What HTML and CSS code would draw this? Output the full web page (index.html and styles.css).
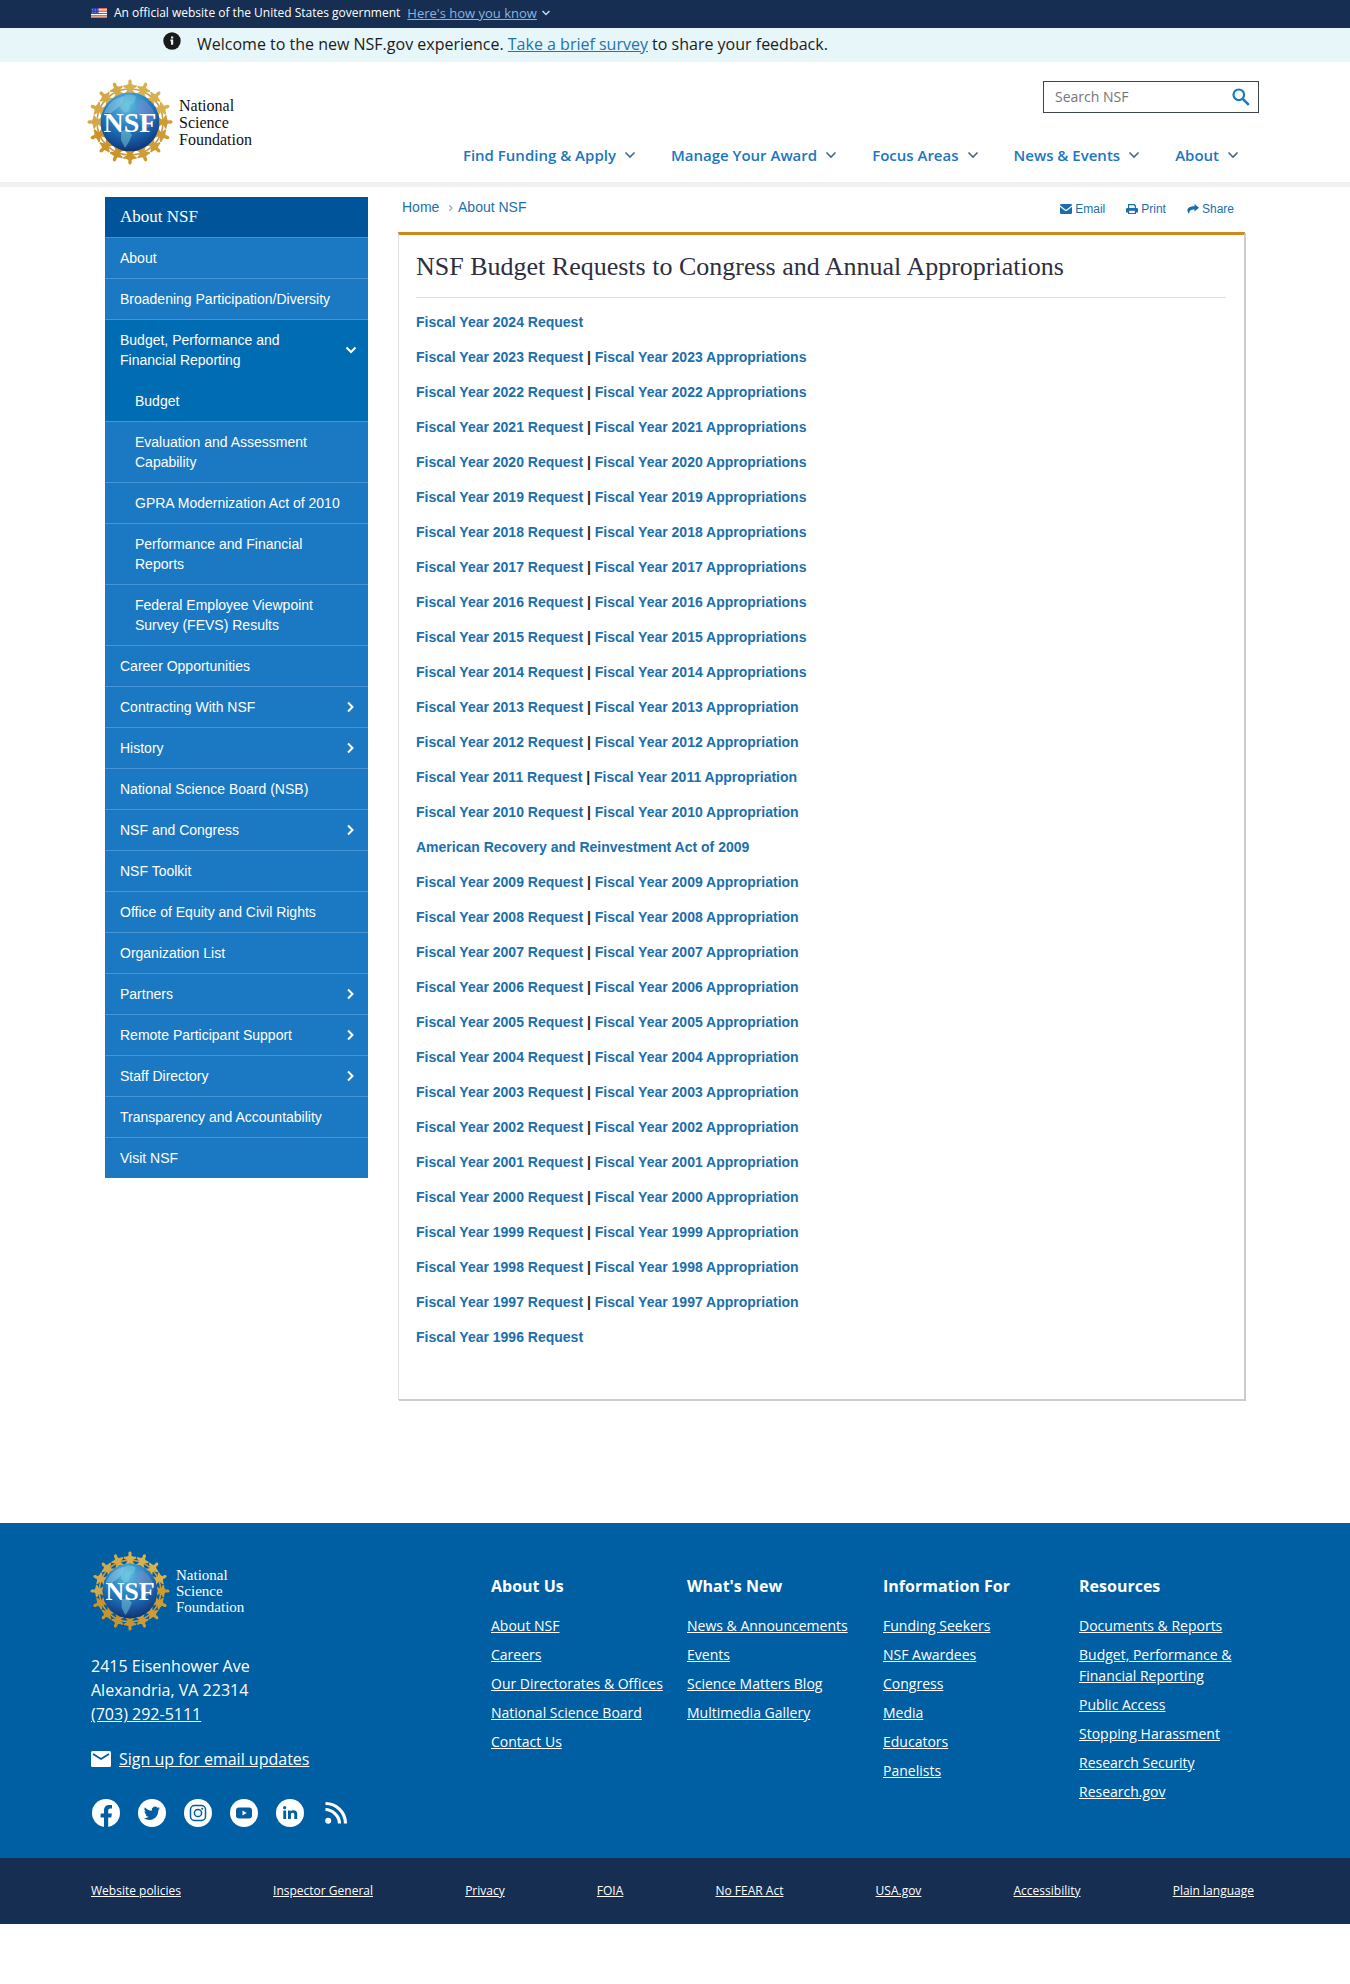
FILE: index.html
```html
<!DOCTYPE html>
<html lang="en">
<head>
<meta charset="utf-8">
<meta name="viewport" content="width=device-width, initial-scale=1">
<title>NSF Budget Requests to Congress and Annual Appropriations</title>
<link rel="stylesheet" href="styles.css">
</head>
<body>
<div class="gov-banner">
  <div class="container gov-banner-inner">
    <svg class="flag" viewBox="0 0 16 10" aria-hidden="true"><rect width="16" height="10" fill="#fff"/><path d="M0 .7h16M0 3.1h16M0 5.5h16M0 7.9h16M0 9.7h16" stroke="#db3e1f" stroke-width="1.1"/><rect width="7.5" height="5.5" fill="#1e33b1"/><path d="M1 1.2h6M1 2.8h6M1 4.4h6" stroke="#b9c0ee" stroke-width=".7" stroke-dasharray=".8 .8"/></svg>
    <span>An official website of the United States government</span>
    <button type="button" class="gov-button"><span>Here's how you know</span><svg class="chevron-xs" viewBox="0 0 10 6" aria-hidden="true"><path d="M1.5 1 5 4.5 8.500 1"/></svg></button>
  </div>
</div>
<div class="alert">
  <div class="container alert-inner">
    <svg class="info" viewBox="0 0 18 18" aria-hidden="true"><circle cx="9" cy="9" r="8.700" fill="#1b1b1b"/><path d="M8 4.500h2.200v2H8zM7.300 7.600h2.900v5.200H8V9.200h-.7z" fill="#e7f6f8"/></svg>
    <p>Welcome to the new NSF.gov experience. <a href="#">Take a brief survey</a> to share your feedback.</p>
  </div>
</div>
<header class="site-header">
  <div class="container header-inner">
    <a class="logo" href="#" aria-label="National Science Foundation home">
      <svg class="seal" viewBox="0 0 86 86" aria-hidden="true">
        <defs>
          <radialGradient id="globe" cx=".45" cy=".22" r=".82"><stop offset="0" stop-color="#63bfe2"/><stop offset=".4" stop-color="#2b85c4"/><stop offset=".75" stop-color="#16539c"/><stop offset="1" stop-color="#0b2e6b"/></radialGradient>
          <g id="person"><path d="M43 .5c1.300 0 1.900 1.400 1.700 3l-.1 1.600c1.400.9 3.400 1.300 5 1.200l.2 1.400c-1.500 1-3.300 1.600-4.200 2.600.2 1.600 1.600 3 3 4.100l-1 1.100c-1.700-.8-3.100-2.100-4.600-2.100s-2.900 1.300-4.600 2.100l-1-1.100c1.400-1.100 2.800-2.500 3-4.100-.9-1-2.700-1.600-4.200-2.600l.2-1.400c1.600.1 3.600-.3 5-1.200l-.1-1.600c-.2-1.600.4-3 1.700-3z"/></g>
          <g id="people"><use href="#person"/><use href="#person" transform="rotate(22.500 43 43)"/><use href="#person" transform="rotate(45 43 43)"/><use href="#person" transform="rotate(67.500 43 43)"/></g>
          <symbol id="nsf-seal" viewBox="0 0 86 86">
            <circle cx="43" cy="43" r="33" fill="none" stroke="#c99d48" stroke-width="1.600"/>
            <use href="#people" fill="#d9b04e"/>
            <use href="#people" fill="#cf9c33" transform="rotate(90 43 43)"/>
            <use href="#people" fill="#cb9328" transform="rotate(180 43 43)"/>
            <use href="#people" fill="#d5a847" transform="rotate(270 43 43)"/>
            <circle cx="43" cy="43" r="29.500" fill="url(#globe)"/>
            <path d="M37 17c3-2 9-2 12 1l-2 6-4 2-1 6-4 2-5-5 1-8zM34 52c5-2 9 0 11 4l-3 7-4 6-4-8z" fill="#7bd0dc" opacity=".5"/>
            <path d="M54 20c7 3 13 10 15 19l-8 10-7-8-4-9z" fill="#8a8fd0" opacity=".45"/>
            <path d="M17 34c4-10 11-15 20-17l-4 10-9 7z" fill="#bfe3f2" opacity=".35"/>
            <text x="43" y="53" text-anchor="middle" class="seal-text">NSF</text>
          </symbol>
        </defs>
        <use href="#nsf-seal" width="86" height="86"/>
      </svg>
      <span class="logo-text">National<br>Science<br>Foundation</span>
    </a>
    <div class="header-tools">
      <form class="search" role="search">
        <input type="search" placeholder="Search NSF" aria-label="Search NSF">
        <button type="button" aria-label="Search"><svg viewBox="0 0 18 18" aria-hidden="true"><circle cx="6.800" cy="6.800" r="5.300" fill="none" stroke="#1b76c0" stroke-width="2.200"/><path d="m10.800 10.800 6 6" stroke="#1b76c0" stroke-width="2.600"/></svg></button>
      </form>
      <nav class="main-nav" aria-label="Main">
        <button type="button">Find Funding &amp; Apply<svg viewBox="0 0 12 8" aria-hidden="true"><path d="m1.500 1.500 4.500 4.500 4.500-4.500"/></svg></button>
        <button type="button">Manage Your Award<svg viewBox="0 0 12 8" aria-hidden="true"><path d="m1.500 1.500 4.500 4.500 4.500-4.500"/></svg></button>
        <button type="button">Focus Areas<svg viewBox="0 0 12 8" aria-hidden="true"><path d="m1.500 1.500 4.500 4.500 4.500-4.500"/></svg></button>
        <button type="button">News &amp; Events<svg viewBox="0 0 12 8" aria-hidden="true"><path d="m1.500 1.500 4.500 4.500 4.500-4.500"/></svg></button>
        <button type="button">About<svg viewBox="0 0 12 8" aria-hidden="true"><path d="m1.500 1.500 4.500 4.500 4.500-4.500"/></svg></button>
      </nav>
    </div>
  </div>
</header>
<div class="page">
  <nav class="sidebar" aria-label="About NSF">
    <h2>About NSF</h2>
    <ul>
      <li><a href="#">About</a></li>
      <li><a href="#">Broadening Participation/Diversity</a></li>
      <li class="open"><a href="#">Budget, Performance and Financial Reporting<svg viewBox="0 0 12 12" aria-hidden="true"><path d="m1.500 3.500 4.500 4.500 4.500-4.500"/></svg></a>
        <ul>
          <li class="current"><a href="#">Budget</a></li>
          <li><a href="#">Evaluation and Assessment Capability</a></li>
          <li><a href="#">GPRA Modernization Act of 2010</a></li>
          <li><a href="#">Performance and Financial Reports</a></li>
          <li><a href="#">Federal Employee Viewpoint Survey (FEVS) Results</a></li>
        </ul>
      </li>
      <li><a href="#">Career Opportunities</a></li>
      <li><a href="#">Contracting With NSF<svg viewBox="0 0 12 12" aria-hidden="true"><path d="m3 1.500 4.500 4.500-4.500 4.500"/></svg></a></li>
      <li><a href="#">History<svg viewBox="0 0 12 12" aria-hidden="true"><path d="m3 1.500 4.500 4.500-4.500 4.500"/></svg></a></li>
      <li><a href="#">National Science Board (NSB)</a></li>
      <li><a href="#">NSF and Congress<svg viewBox="0 0 12 12" aria-hidden="true"><path d="m3 1.500 4.500 4.500-4.500 4.500"/></svg></a></li>
      <li><a href="#">NSF Toolkit</a></li>
      <li><a href="#">Office of Equity and Civil Rights</a></li>
      <li><a href="#">Organization List</a></li>
      <li><a href="#">Partners<svg viewBox="0 0 12 12" aria-hidden="true"><path d="m3 1.500 4.500 4.500-4.500 4.500"/></svg></a></li>
      <li><a href="#">Remote Participant Support<svg viewBox="0 0 12 12" aria-hidden="true"><path d="m3 1.500 4.500 4.500-4.500 4.500"/></svg></a></li>
      <li><a href="#">Staff Directory<svg viewBox="0 0 12 12" aria-hidden="true"><path d="m3 1.500 4.500 4.500-4.500 4.500"/></svg></a></li>
      <li><a href="#">Transparency and Accountability</a></li>
      <li><a href="#">Visit NSF</a></li>
    </ul>
  </nav>
  <main class="main">
    <div class="toolbar">
      <nav class="breadcrumb" aria-label="Breadcrumb"><a href="#">Home</a><span>›</span><a href="#">About NSF</a></nav>
      <div class="actions">
        <a href="#"><svg viewBox="0 0 12 12" aria-hidden="true"><path d="M0 2.200Q0 1 1.200 1h9.600Q12 1 12 2.200L7 6.300q-1 .8-2 0zM0 3.800l4.300 3.500q1.700 1.200 3.400 0L12 3.800v6.100q0 1.100-1.200 1.100H1.200Q0 11 0 9.900z"/></svg>Email</a>
        <a href="#"><svg viewBox="0 0 12 12" aria-hidden="true"><path fill-rule="evenodd" d="M2 5V1h6.500L10 2.500V5h.8Q12 5 12 6.200v3.300h-2V11H2V9.500H0V6.200Q0 5 1.200 5zm1.200 0h5.600V3H8V2.200H3.200zm0 2.700v2.200h5.600V7.700z"/></svg>Print</a>
        <a href="#"><svg viewBox="0 0 12 12" aria-hidden="true"><path d="M7.500 1 12 4.800 7.500 8.600V6.400C4.500 6.300 2.500 7 2 10.800-1.500 6.500 1 3.200 7.500 3.200z"/></svg>Share</a>
      </div>
    </div>
    <article class="panel">
      <h1>NSF Budget Requests to Congress and Annual Appropriations</h1>
      <div class="years">
        <p><a href="#">Fiscal Year 2024 Request</a></p>
        <p><a href="#">Fiscal Year 2023 Request</a> | <a href="#">Fiscal Year 2023 Appropriations</a></p>
        <p><a href="#">Fiscal Year 2022 Request</a> | <a href="#">Fiscal Year 2022 Appropriations</a></p>
        <p><a href="#">Fiscal Year 2021 Request</a> | <a href="#">Fiscal Year 2021 Appropriations</a></p>
        <p><a href="#">Fiscal Year 2020 Request</a> | <a href="#">Fiscal Year 2020 Appropriations</a></p>
        <p><a href="#">Fiscal Year 2019 Request</a> | <a href="#">Fiscal Year 2019 Appropriations</a></p>
        <p><a href="#">Fiscal Year 2018 Request</a> | <a href="#">Fiscal Year 2018 Appropriations</a></p>
        <p><a href="#">Fiscal Year 2017 Request</a> | <a href="#">Fiscal Year 2017 Appropriations</a></p>
        <p><a href="#">Fiscal Year 2016 Request</a> | <a href="#">Fiscal Year 2016 Appropriations</a></p>
        <p><a href="#">Fiscal Year 2015 Request</a> | <a href="#">Fiscal Year 2015 Appropriations</a></p>
        <p><a href="#">Fiscal Year 2014 Request</a> | <a href="#">Fiscal Year 2014 Appropriations</a></p>
        <p><a href="#">Fiscal Year 2013 Request</a> | <a href="#">Fiscal Year 2013 Appropriation</a></p>
        <p><a href="#">Fiscal Year 2012 Request</a> | <a href="#">Fiscal Year 2012 Appropriation</a></p>
        <p><a href="#">Fiscal Year 2011 Request</a> | <a href="#">Fiscal Year 2011 Appropriation</a></p>
        <p><a href="#">Fiscal Year 2010 Request</a> | <a href="#">Fiscal Year 2010 Appropriation</a></p>
        <p><a href="#">American Recovery and Reinvestment Act of 2009</a></p>
        <p><a href="#">Fiscal Year 2009 Request</a> | <a href="#">Fiscal Year 2009 Appropriation</a></p>
        <p><a href="#">Fiscal Year 2008 Request</a> | <a href="#">Fiscal Year 2008 Appropriation</a></p>
        <p><a href="#">Fiscal Year 2007 Request</a> | <a href="#">Fiscal Year 2007 Appropriation</a></p>
        <p><a href="#">Fiscal Year 2006 Request</a> | <a href="#">Fiscal Year 2006 Appropriation</a></p>
        <p><a href="#">Fiscal Year 2005 Request</a> | <a href="#">Fiscal Year 2005 Appropriation</a></p>
        <p><a href="#">Fiscal Year 2004 Request</a> | <a href="#">Fiscal Year 2004 Appropriation</a></p>
        <p><a href="#">Fiscal Year 2003 Request</a> | <a href="#">Fiscal Year 2003 Appropriation</a></p>
        <p><a href="#">Fiscal Year 2002 Request</a> | <a href="#">Fiscal Year 2002 Appropriation</a></p>
        <p><a href="#">Fiscal Year 2001 Request</a> | <a href="#">Fiscal Year 2001 Appropriation</a></p>
        <p><a href="#">Fiscal Year 2000 Request</a> | <a href="#">Fiscal Year 2000 Appropriation</a></p>
        <p><a href="#">Fiscal Year 1999 Request</a> | <a href="#">Fiscal Year 1999 Appropriation</a></p>
        <p><a href="#">Fiscal Year 1998 Request</a> | <a href="#">Fiscal Year 1998 Appropriation</a></p>
        <p><a href="#">Fiscal Year 1997 Request</a> | <a href="#">Fiscal Year 1997 Appropriation</a></p>
        <p><a href="#">Fiscal Year 1996 Request</a></p>
      </div>
    </article>
  </main>
</div>
<footer class="site-footer">
  <div class="container footer-inner">
    <div class="contact">
      <a class="logo logo-footer" href="#" aria-label="National Science Foundation home">
        <svg class="seal" viewBox="0 0 86 86" aria-hidden="true"><use href="#nsf-seal" width="86" height="86"/></svg>
        <span class="logo-text">National<br>Science<br>Foundation</span>
      </a>
      <address>2415 Eisenhower Ave<br>Alexandria, VA 22314<br><a href="#">(703) 292-5111</a></address>
      <div class="signup"><svg viewBox="0 0 20 16" aria-hidden="true"><rect width="20" height="16" rx="1.500" fill="#fff"/><path d="m2 3 8 5 8-5" fill="none" stroke="#005ea2" stroke-width="1.800"/></svg><a href="#">Sign up for email updates</a></div>
      <div class="social">
        <a href="#" aria-label="Facebook"><svg viewBox="0 0 28 28" aria-hidden="true"><circle cx="14" cy="14" r="14"/><path class="cut" d="M12 28v-9.500H8.600v-4H12v-3c0-3.700 2-5.600 5.300-5.600 1.200 0 2.700.2 2.700.2v3.300h-1.700c-1.600 0-2.100 1-2.100 2v3.100h3.700l-.6 4h-3.100V28z"/></svg></a>
        <a href="#" aria-label="Twitter"><svg viewBox="0 0 28 28" aria-hidden="true"><circle cx="14" cy="14" r="14"/><path class="cut" d="M22 9.200c-.6.300-1.200.4-1.900.5.700-.4 1.200-1 1.400-1.800-.6.400-1.300.6-2.100.8a3.300 3.300 0 0 0-5.600 3c-2.700-.1-5.200-1.500-6.800-3.500a3.300 3.300 0 0 0 1 4.400c-.5 0-1-.1-1.500-.4 0 1.700 1.100 3 2.600 3.300-.5.100-1 .1-1.500 0 .4 1.300 1.600 2.300 3.100 2.300A6.600 6.600 0 0 1 5.900 19.200c7.300 4.500 14.500-.4 14.400-8 .7-.6 1.200-1.200 1.700-2z"/></svg></a>
        <a href="#" aria-label="Instagram"><svg viewBox="0 0 28 28" aria-hidden="true"><circle cx="14" cy="14" r="14"/><g fill="none" stroke="#005ea2" stroke-width="1.500"><rect x="6.500" y="6.500" width="15" height="15" rx="4"/><circle cx="14" cy="14" r="3.600"/></g><circle class="cut" cx="18.200" cy="9.800" r="1"/></svg></a>
        <a href="#" aria-label="YouTube"><svg viewBox="0 0 28 28" aria-hidden="true"><circle cx="14" cy="14" r="14"/><rect class="cut" x="6" y="8.500" width="16" height="11" rx="3"/><path d="m12.500 11.600 4.200 2.400-4.200 2.400z"/></svg></a>
        <a href="#" aria-label="LinkedIn"><svg viewBox="0 0 28 28" aria-hidden="true"><circle cx="14" cy="14" r="14"/><path class="cut" d="M7.300 11.500h2.800V20H7.300zM12 11.500h2.700v1.200c1.300-2.300 6.500-2 6.500 2V20h-2.900v-4.700c0-2.200-3.400-2-3.400 0V20H12z"/><circle class="cut" cx="8.700" cy="8.700" r="1.600"/></svg></a>
        <a href="#" aria-label="RSS"><svg viewBox="0 0 28 28" aria-hidden="true"><circle cx="6.200" cy="21.800" r="3"/><path d="M3.500 10.500C10 10.500 17.500 17 17.500 24.500M3.500 4.500c11 0 20 9 20 20" fill="none" stroke="#fff" stroke-width="3.200"/></svg></a>
      </div>
    </div>
    <nav class="footer-nav" aria-label="Footer">
      <section><h3>About Us</h3><ul><li><a href="#">About NSF</a></li><li><a href="#">Careers</a></li><li><a href="#">Our Directorates &amp; Offices</a></li><li><a href="#">National Science Board</a></li><li><a href="#">Contact Us</a></li></ul></section>
      <section><h3>What's New</h3><ul><li><a href="#">News &amp; Announcements</a></li><li><a href="#">Events</a></li><li><a href="#">Science Matters Blog</a></li><li><a href="#">Multimedia Gallery</a></li></ul></section>
      <section><h3>Information For</h3><ul><li><a href="#">Funding Seekers</a></li><li><a href="#">NSF Awardees</a></li><li><a href="#">Congress</a></li><li><a href="#">Media</a></li><li><a href="#">Educators</a></li><li><a href="#">Panelists</a></li></ul></section>
      <section><h3>Resources</h3><ul><li><a href="#">Documents &amp; Reports</a></li><li><a href="#">Budget, Performance &amp; Financial Reporting</a></li><li><a href="#">Public Access</a></li><li><a href="#">Stopping Harassment</a></li><li><a href="#">Research Security</a></li><li><a href="#">Research.gov</a></li></ul></section>
    </nav>
  </div>
  <div class="legal">
    <nav class="container legal-inner" aria-label="Policies">
      <a href="#">Website policies</a><a href="#">Inspector General</a><a href="#">Privacy</a><a href="#">FOIA</a><a href="#">No FEAR Act</a><a href="#">USA.gov</a><a href="#">Accessibility</a><a href="#">Plain language</a>
    </nav>
  </div>
</footer>
</body>
</html>
```
FILE: styles.css
```css
* { box-sizing: border-box; }
body { margin: 0; background: #fff; color: #1b1b1b; font: 16px/24px "Open Sans", sans-serif; }
p, h1, h2, h3, ul, address { margin: 0; padding: 0; }
ul { list-style: none; }
button, input { font: inherit; border: 0; background: none; padding: 0; margin: 0; border-radius: 0; }
.container { max-width: 1168px; margin: 0 auto; }

.gov-banner { background: #162e51; color: #fff; font-size: 12px; line-height: 16px; }
.gov-banner-inner { display: flex; align-items: center; gap: 7px; padding: 5px 0 7px; }
.flag { width: 16px; height: 10px; }
.gov-button { display: flex; align-items: center; gap: 4px; color: #8bb4e0; font-size: 13px; line-height: 16px; }
.gov-button span { text-decoration: underline; }
.chevron-xs { width: 10px; height: 6px; fill: none; stroke: #c5d9ee; stroke-width: 1.5; }

.alert { background: #e7f6f8; }
.alert-inner { display: flex; align-items: flex-start; gap: 16px; padding: 4px 0 6px 72px; }
.alert a { color: #2472ae; }
.info { width: 18px; height: 18px; }

.site-header { border-bottom: 5px solid #f0f0f0; }
.header-inner { display: flex; justify-content: space-between; padding: 17px 0; }
.logo { display: flex; align-items: center; gap: 6px; height: 86px; margin-left: -4px; color: #111; text-decoration: none; font: 16px/17px "Liberation Serif", serif; }
.seal { width: 86px; height: 86px; }
.seal-text { font: bold 28px "Liberation Serif", serif; fill: #fff; }
.header-tools { display: flex; flex-direction: column; align-items: flex-end; justify-content: space-between; padding-top: 2px; }
.search { display: flex; align-items: center; width: 216px; height: 32px; border: 1px solid #3d4551; padding: 0 8px 0 11px; }
.search input { flex: 1; min-width: 0; font-size: 14px; line-height: 20px; outline: 0; appearance: none; }
.search input::placeholder { color: #757575; opacity: 1; }
.search svg { width: 18px; height: 18px; display: block; }
.main-nav { display: flex; gap: 35px; padding-right: 20px; }
.main-nav button { display: flex; align-items: center; gap: 8px; color: #1b76c0; font-weight: 600; font-size: 15px; line-height: 20px; white-space: nowrap; }
.main-nav svg { width: 12px; height: 8px; fill: none; stroke: #41698c; stroke-width: 1.6; }

.page { display: grid; grid-template-columns: 263px 1fr; gap: 30px; align-items: start; max-width: 1140px; margin: 0 auto; padding: 10px 0 123px; font: 14px/20px "Liberation Sans", sans-serif; }
.sidebar { background: #1b78c2; }
.sidebar h2 { background: #00549a; color: #fff; padding: 10px 15px; font: 17px/20px "Liberation Serif", serif; }
.sidebar a { display: flex; align-items: center; justify-content: space-between; padding: 10px 11px 10px 15px; border-top: 1px solid #4795d5; color: #fff; text-decoration: none; }
.sidebar svg { flex: none; width: 12px; height: 12px; margin-left: 40px; fill: none; stroke: #fff; stroke-width: 2; }
.sidebar .open > a { background: #006cb4; }
.sidebar .open li a { padding: 10px 25px 10px 30px; }
.sidebar .current a { background: #006cb4; border-top-color: #006cb4; }

.toolbar { display: flex; justify-content: space-between; height: 35px; padding: 0 11px 0 4px; }
.toolbar a { color: #1b6fae; text-decoration: none; }
.breadcrumb { display: flex; gap: 5px; }
.breadcrumb span { padding-left: 4px; color: #7a9bb5; }
.actions { display: flex; gap: 21px; font-size: 12px; line-height: 24px; }
.actions a { display: flex; align-items: center; align-self: flex-start; gap: 3px; }
.actions svg { width: 12px; height: 12px; fill: #1b6fae; }
.panel { border: 1px solid #ccc; border-top: 3px solid #d08a1c; border-left-color: #e3e3e3; box-shadow: 1px 1px 0 #ccc; padding: 15px 18px 52px 17px; }
.panel h1 { padding: 0 0 14px; border-bottom: 1px solid #ddd; margin-bottom: 14px; color: #2e2e40; font: 26px/33px "Liberation Serif", serif; }
.years { display: grid; gap: 15px; font-weight: bold; }
.years a { color: #1b6fae; text-decoration: none; }

.site-footer { background: #005ea2; color: #fff; }
.site-footer a { color: #fff; }
.footer-inner { display: grid; grid-template-columns: 384px 1fr; gap: 16px; padding: 27px 0 31px; }
.logo-footer { gap: 6px; height: 82px; margin-left: -1px; font: 15px/16px "Liberation Serif", serif; }
.site-footer .logo { text-decoration: none; }
.logo-footer .seal { width: 80px; height: 80px; }
address { font-style: normal; padding: 22px 0 21px; }
.signup { display: flex; align-items: center; gap: 8px; }
.signup svg { width: 20px; height: 16px; }
.social { display: flex; gap: 18px; padding: 28px 0 0 1px; }
.social a, .social svg { display: block; width: 28px; height: 28px; }
.social svg { fill: #fff; }
.social .cut { fill: #005ea2; }
.footer-nav { display: grid; grid-template-columns: repeat(4, 1fr); gap: 16px; padding: 24px 0 0; font-size: 14px; line-height: 21px; }
.footer-nav h3 { font-size: 16px; line-height: 24px; margin-bottom: 17px; }
.footer-nav ul { display: grid; gap: 8px; }
.legal { background: #162e51; font-size: 12px; line-height: 18px; }
.legal-inner { display: flex; justify-content: space-between; padding: 24px 5px 24px 0; }
```
